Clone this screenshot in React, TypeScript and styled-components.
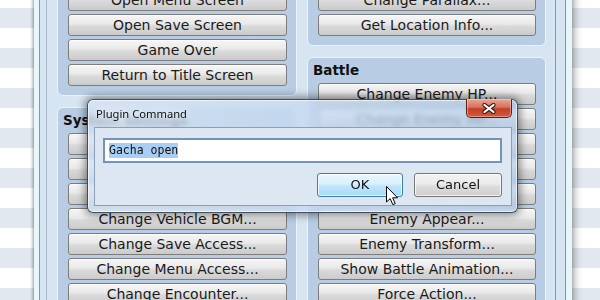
import styled, { createGlobalStyle } from "styled-components";

const GlobalStyle = createGlobalStyle`
  html, body {
    margin: 0;
    padding: 0;
  }
  body {
    font-family: "DejaVu Sans", "Noto Sans", sans-serif;
  }
`;

interface Section {
  title: string;
  items: string[];
}

const leftColumn: Section[] = [
  {
    title: "Scene Control",
    items: [
      "Battle Processing...",
      "Shop Processing...",
      "Name Input Processing...",
      "Open Menu Screen",
      "Open Save Screen",
      "Game Over",
      "Return to Title Screen",
    ],
  },
  {
    title: "System Settings",
    items: [
      "Change Battle BGM...",
      "Change Victory ME...",
      "Change Defeat ME...",
      "Change Vehicle BGM...",
      "Change Save Access...",
      "Change Menu Access...",
      "Change Encounter...",
      "Change Formation Access...",
    ],
  },
];

const rightColumn: Section[] = [
  {
    title: "Map",
    items: [
      "Change Map Name Display...",
      "Change Tileset...",
      "Change Battle Back...",
      "Change Parallax...",
      "Get Location Info...",
    ],
  },
  {
    title: "Battle",
    items: [
      "Change Enemy HP...",
      "Change Enemy MP...",
      "Change Enemy TP...",
      "Change Enemy State...",
      "Enemy Recover All...",
      "Enemy Appear...",
      "Enemy Transform...",
      "Show Battle Animation...",
      "Force Action...",
      "Abort Battle",
    ],
  },
];

const App = () => {
  return (
    <Screen>
      <GlobalStyle />
      <Window>
        <Client>
          <Page>
            {[leftColumn, rightColumn].map((column, ci) => (
              <Column key={ci}>
                {column.map((section) => (
                  <Group key={section.title}>
                    <GroupTitle>{section.title}</GroupTitle>
                    {section.items.map((item) => (
                      <CommandButton key={item}>{item}</CommandButton>
                    ))}
                  </Group>
                ))}
              </Column>
            ))}
          </Page>
        </Client>
      </Window>

      <Dialog>
        <TitleBar>Plugin Command</TitleBar>
        <CloseButton>
          <svg width="14" height="11" viewBox="0 0 14 11">
            <path
              d="M2.5 2 L11.5 9 M11.5 2 L2.5 9"
              stroke="#3a1a16"
              strokeWidth="4.2"
              strokeLinecap="round"
            />
            <path
              d="M2.5 2 L11.5 9 M11.5 2 L2.5 9"
              stroke="#ffffff"
              strokeWidth="2.2"
              strokeLinecap="round"
            />
          </svg>
        </CloseButton>
        <DialogBody>
          <TextBox>
            <Selected>Gacha open</Selected>
          </TextBox>
          <ButtonRow>
            <DialogButton $hover $width={86}>
              OK
            </DialogButton>
            <DialogButton $width={88}>Cancel</DialogButton>
          </ButtonRow>
        </DialogBody>
      </Dialog>

      <Cursor width="13" height="20" viewBox="0 0 13 20">
        <path
          d="M0.5 0.5 L0.5 16 L4.2 12.6 L6.8 18.6 L9.2 17.6 L6.7 11.8 L11.6 11.8 Z"
          fill="#ffffff"
          stroke="#000000"
          strokeWidth="1"
          strokeLinejoin="round"
        />
      </Cursor>
    </Screen>
  );
};

export default App;

const Screen = styled.div`
  position: relative;
  width: 600px;
  height: 300px;
  overflow: hidden;
  background: repeating-linear-gradient(
    to bottom,
    #ffffff 0px,
    #ffffff 8px,
    #e2e8f0 8px,
    #e2e8f0 28px,
    #ffffff 28px,
    #ffffff 40px
  );
`;

const Window = styled.div`
  margin-left: 34px;
  margin-top: -128px;
  width: 538px;
  height: 480px;
  box-sizing: border-box;
  border-left: 5px solid #e6f6fa;
  border-right: 6px solid #e6f6fa;
  box-shadow: -1px 0 3px rgba(0, 0, 0, 0.35), 3px 0 7px rgba(0, 0, 0, 0.3);
  display: flex;
`;

const Client = styled.div`
  flex: 1;
  background: #d7e4f2;
  border-left: 1px solid #8595a8;
  border-right: 1px solid #8595a8;
  padding: 6px 9px 0 6px;
  display: flex;
`;

const Page = styled.div`
  flex: 1;
  border-left: 1px solid #a9b9cb;
  border-right: 1px solid #8595a8;
  padding: 10px 9px 0 10px;
  display: grid;
  grid-template-columns: 240px 239px;
  column-gap: 10px;
  align-items: start;
`;

const Column = styled.div`
  display: flex;
  flex-direction: column;
  gap: 11px;
`;

const Group = styled.div`
  background: #b8cde3;
  border: 1px solid #edf3fa;
  border-radius: 6px;
  padding: 0 9px 9px 10px;
  display: flex;
  flex-direction: column;
  gap: 3px;
`;

const GroupTitle = styled.div`
  font-weight: bold;
  font-size: 13.5px;
  line-height: 18px;
  padding: 3px 0 0 0;
  margin: 0 0 1px -5px;
  color: #111111;
  white-space: nowrap;
`;

const CommandButton = styled.div`
  height: 22px;
  box-sizing: border-box;
  border: 1px solid #7d7d7d;
  border-radius: 3px;
  background: linear-gradient(
    to bottom,
    #f6f6f6 0%,
    #e9e9e9 45%,
    #dadada 55%,
    #cbcbcb 100%
  );
  box-shadow: inset 0 1px 0 rgba(255, 255, 255, 0.8);
  font-size: 14px;
  line-height: 20px;
  text-align: center;
  color: #1a1a1a;
  white-space: nowrap;
`;

const Dialog = styled.div`
  position: absolute;
  left: 87px;
  top: 99px;
  width: 431px;
  height: 114px;
  box-sizing: border-box;
  border: 1px solid rgba(20, 30, 45, 0.75);
  border-radius: 6px;
  background: linear-gradient(
    to right,
    rgba(212, 227, 243, 0.78),
    rgba(182, 207, 236, 0.74)
  );
  backdrop-filter: blur(2.5px);
  box-shadow: 0 0 8px 2px rgba(0, 0, 0, 0.45),
    inset 0 0 0 1px rgba(255, 255, 255, 0.6);
  display: flex;
  flex-direction: column;
`;

const TitleBar = styled.div`
  height: 27px;
  padding-left: 8px;
  font-family: "Noto Sans", "DejaVu Sans", sans-serif;
  font-size: 11.2px;
  line-height: 27px;
  color: #0d0d0d;
  text-shadow: 0 0 6px #ffffff, 0 0 10px rgba(255, 255, 255, 0.9);
`;

const CloseButton = styled.div`
  position: absolute;
  top: -1px;
  right: 5px;
  width: 46px;
  height: 19px;
  box-sizing: border-box;
  border: 1px solid #5a2018;
  border-top: none;
  border-radius: 0 0 5px 5px;
  background: linear-gradient(
    to bottom,
    #eaa697 0%,
    #d8725e 45%,
    #c23f28 55%,
    #d25b3d 100%
  );
  box-shadow: inset 0 0 0 1px rgba(255, 220, 210, 0.45);
  display: flex;
  align-items: center;
  justify-content: center;
`;

const DialogBody = styled.div`
  margin: 0 5px 6px 6px;
  border: 1px solid #8a9fb9;
  background: #dde7f2;
  padding: 10px 9px 8px 8px;
  display: flex;
  flex-direction: column;
  gap: 10px;
`;

const TextBox = styled.div`
  height: 25px;
  box-sizing: border-box;
  border: 2px solid #7293bc;
  background: #ffffff;
  padding-left: 4px;
  display: flex;
  align-items: center;
`;

const Selected = styled.span`
  font-family: "DejaVu Sans Mono", "Liberation Mono", monospace;
  font-size: 11.5px;
  line-height: 15px;
  background: #a9cef3;
  color: #111111;
  white-space: pre;
`;

const ButtonRow = styled.div`
  display: flex;
  justify-content: flex-end;
  gap: 11px;
`;

const DialogButton = styled.div<{ $hover?: boolean; $width: number }>`
  width: ${(p) => p.$width}px;
  height: 24px;
  box-sizing: border-box;
  border-radius: 3px;
  border: 1px solid ${(p) => (p.$hover ? "#3c7fb1" : "#777777")};
  background: ${(p) =>
    p.$hover
      ? "linear-gradient(to bottom, #eaf6fd 0%, #d9f0fc 45%, #bee6fd 55%, #a7d9f5 100%)"
      : "linear-gradient(to bottom, #f2f2f2 0%, #ebebeb 45%, #dddddd 55%, #cfcfcf 100%)"};
  box-shadow: inset 0 0 0 1px rgba(255, 255, 255, 0.7);
  font-size: 13px;
  line-height: 22px;
  text-align: center;
  color: #111111;
`;

const Cursor = styled.svg`
  position: absolute;
  left: 386px;
  top: 186px;
`;
